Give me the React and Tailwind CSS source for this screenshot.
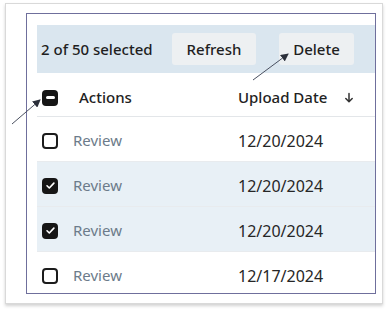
import React from 'react';

const rows = [
  { date: '12/20/2024', checked: false },
  { date: '12/20/2024', checked: true },
  { date: '12/20/2024', checked: true },
  { date: '12/17/2024', checked: false },
];

function Checkbox({ state }) {
  if (state === 'none') {
    return <span className="block w-4 h-4 rounded-[4px] border-2 border-[#1c1c1c] bg-white shrink-0" />;
  }
  return (
    <span className="flex items-center justify-center w-4 h-4 rounded-[4px] bg-[#161616] shrink-0">
      {state === 'checked' ? (
        <svg width="11" height="11" viewBox="0 0 12 12">
          <path d="M2.2 6.3l2.5 2.4 5-5.3" fill="none" stroke="#fff" strokeWidth="1.8" strokeLinecap="round" strokeLinejoin="round" />
        </svg>
      ) : (
        <span className="block w-[9px] h-[2.5px] bg-white rounded-sm" />
      )}
    </span>
  );
}

export default function App() {
  return (
    <div className="relative w-[389px] h-[315px] bg-white pl-[5px] pt-[3px]" style={{ fontFamily: '"Noto Sans", "Open Sans", sans-serif' }}>
      {/* Outer frame */}
      <div className="w-[378px] h-[301px] bg-white border border-[#d9d9d9] shadow-[0_2px_3px_rgba(0,0,0,0.18)] pl-[20px] pt-[9px]">
        {/* Table box */}
        <div className="w-[350px] h-[281px] border-[1.5px] border-[#6f6f9c] pl-[10px] pt-[11px] overflow-hidden">
          {/* Toolbar */}
          <div className="h-[48px] bg-[#dae6ef] flex items-center pl-[4px] text-[15px] font-medium text-[#1f1f1f]">
            <span className="w-[131px]">2 of 50 selected</span>
            <button className="w-[84px] h-[32px] rounded-[3px] bg-[#edf0f2] text-[15px] font-medium text-[#1f1f1f]">Refresh</button>
            <button className="ml-[23px] w-[75px] h-[32px] rounded-[3px] bg-[#edf0f2] text-[15px] font-medium text-[#1f1f1f]">Delete</button>
          </div>
          {/* Header */}
          <div className="h-[44px] flex items-center pl-[5px] pt-[6px] border-b border-[#e3e6e9] text-[15px] font-medium text-[#222]">
            <Checkbox state="mixed" />
            <span className="ml-[21px] w-[159px]">Actions</span>
            <span>Upload Date</span>
            <svg className="ml-[17px]" width="10" height="12" viewBox="0 0 10 12">
              <path d="M5 1.5v8M1.8 6.5L5 9.8l3.2-3.3" fill="none" stroke="#333" strokeWidth="1.5" strokeLinecap="round" strokeLinejoin="round" />
            </svg>
          </div>
          {rows.map((r, i) => (
            <div
              key={i}
              className={`h-[45px] flex items-center pl-[5px] pt-[3px] border-b border-[#e8ebee] ${r.checked ? 'bg-[#e8f0f6]' : 'bg-white'}`}
            >
              <Checkbox state={r.checked ? 'checked' : 'none'} />
              <span className="ml-[15px] w-[165px] text-[15px] text-[#6c7b8a]">Review</span>
              <span className="text-[16px] text-[#262626]">{r.date}</span>
            </div>
          ))}
        </div>
      </div>

      {/* Annotation arrows */}
      <svg className="absolute left-0 top-0 pointer-events-none" width="389" height="315">
        <defs>
          <marker id="ah" markerWidth="8" markerHeight="8" refX="7" refY="4" orient="auto" markerUnits="userSpaceOnUse">
            <path d="M0 0L8 4L0 8z" fill="#2b2f3a" />
          </marker>
        </defs>
        <line x1="12" y1="124" x2="40" y2="100" stroke="#4a5060" strokeWidth="1" markerEnd="url(#ah)" />
        <line x1="253" y1="80" x2="288" y2="54" stroke="#4a5060" strokeWidth="1" markerEnd="url(#ah)" />
      </svg>
    </div>
  );
}
